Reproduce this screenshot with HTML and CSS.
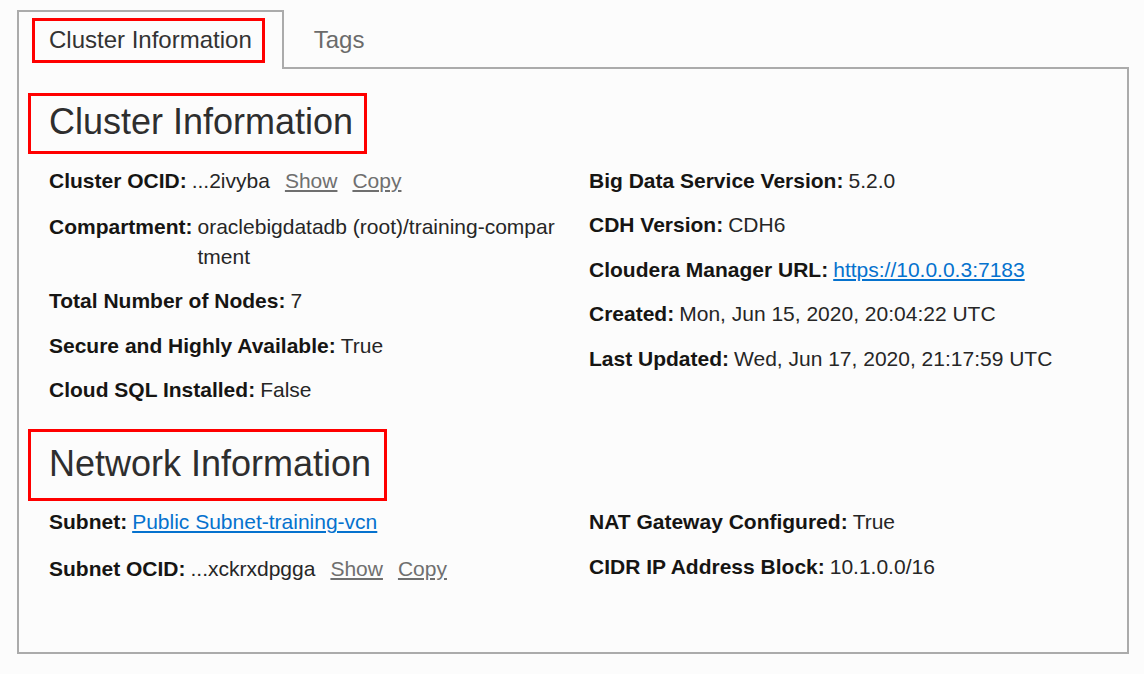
FILE: index.html
```html
<!DOCTYPE html>
<html lang="en">
<head>
<meta charset="utf-8">
<title>Cluster Information</title>
<link rel="stylesheet" href="styles.css">
</head>
<body>
<div class="page">
  <div class="tabs">
    <div class="tab tab--active"><span class="tab-label tab-label--marked">Cluster Information</span></div>
    <div class="tab"><span class="tab-label tab-label--muted">Tags</span></div>
    <div class="tab-fill"></div>
  </div>
  <div class="panel">
    <section class="section">
      <h2 class="section-title section-title--first">Cluster Information</h2>
      <div class="fields">
        <div class="col">
          <div class="field field--tall"><span class="label">Cluster OCID:</span><span class="value">...2ivyba</span><a class="action" href="#">Show</a><a class="action" href="#">Copy</a></div>
          <div class="field"><span class="label">Compartment:</span><span class="value value--wrap">oraclebigdatadb (root)/training-compartment</span></div>
          <div class="field"><span class="label">Total Number of Nodes:</span><span class="value">7</span></div>
          <div class="field"><span class="label">Secure and Highly Available:</span><span class="value">True</span></div>
          <div class="field"><span class="label">Cloud SQL Installed:</span><span class="value">False</span></div>
        </div>
        <div class="col">
          <div class="field"><span class="label">Big Data Service Version:</span><span class="value">5.2.0</span></div>
          <div class="field"><span class="label">CDH Version:</span><span class="value">CDH6</span></div>
          <div class="field"><span class="label">Cloudera Manager URL:</span><a class="value link" href="#">https://10.0.0.3:7183</a></div>
          <div class="field"><span class="label">Created:</span><span class="value">Mon, Jun 15, 2020, 20:04:22 UTC</span></div>
          <div class="field"><span class="label">Last Updated:</span><span class="value">Wed, Jun 17, 2020, 21:17:59 UTC</span></div>
        </div>
      </div>
    </section>
    <section class="section">
      <h2 class="section-title section-title--second">Network Information</h2>
      <div class="fields">
        <div class="col">
          <div class="field field--tall"><span class="label">Subnet:</span><a class="value link" href="#">Public Subnet-training-vcn</a></div>
          <div class="field field--tall"><span class="label">Subnet OCID:</span><span class="value">...xckrxdpgga</span><a class="action" href="#">Show</a><a class="action" href="#">Copy</a></div>
        </div>
        <div class="col">
          <div class="field"><span class="label">NAT Gateway Configured:</span><span class="value">True</span></div>
          <div class="field"><span class="label">CIDR IP Address Block:</span><span class="value">10.1.0.0/16</span></div>
        </div>
      </div>
    </section>
  </div>
</div>
</body>
</html>
```

FILE: styles.css
```css
* {
  box-sizing: border-box;
}

html, body {
  margin: 0;
  background: #fcfcfc;
}

body {
  font-family: "Liberation Sans", Arial, sans-serif;
  color: #161513;
}

.page {
  width: 1129px;
  padding: 10px 0 0 17px;
}

.tabs {
  display: flex;
  height: 59px;
}

.tab {
  padding: 8px 0 0 13px;
  border-bottom: 2px solid #ababab;
}

.tab--active {
  padding: 6px 17px 0 13px;
  border: 2px solid #ababab;
  border-bottom: 0;
}

.tab-fill {
  flex: 1;
  border-bottom: 2px solid #ababab;
}

.tab-label {
  display: block;
  font-size: 24px;
  line-height: 28.8px;
  padding: 5px 10px 5px 14px;
  border: 3px solid transparent;
  color: #333333;
}

.tab-label--marked {
  border-color: #ff0000;
}

.tab-label--muted {
  color: #6b6b6b;
}

.panel {
  border: 2px solid #ababab;
  border-top: 0;
  padding: 24px 30px 67px 30px;
}

.section-title {
  width: fit-content;
  font-size: 36px;
  font-weight: normal;
  line-height: 43px;
  color: #2e2e2e;
  border: 3px solid #ff0000;
}

.section-title--first {
  margin: 0 0 12px -21px;
  padding: 4px 11px 8px 18px;
}

.section-title--second {
  margin: 25px 0 6px -21px;
  padding: 10px 13px 13px 18px;
}

.fields {
  display: grid;
  grid-template-columns: 510px 1fr;
  column-gap: 30px;
}

.col {
  display: flex;
  flex-direction: column;
  gap: 15px;
}

.field {
  display: flex;
  align-items: baseline;
  font-size: 21px;
  line-height: 29.4px;
}

.field--tall {
  padding-bottom: 2px;
}

.label {
  font-weight: bold;
  white-space: nowrap;
  color: #161513;
}

.value {
  margin-left: 5px;
  color: #262626;
  min-width: 0;
}

.value--wrap {
  word-break: break-all;
}

.link {
  color: #0572ce;
  text-decoration: underline;
}

.action {
  margin-left: 15px;
  color: #6f6f6f;
  text-decoration: underline;
}
```
